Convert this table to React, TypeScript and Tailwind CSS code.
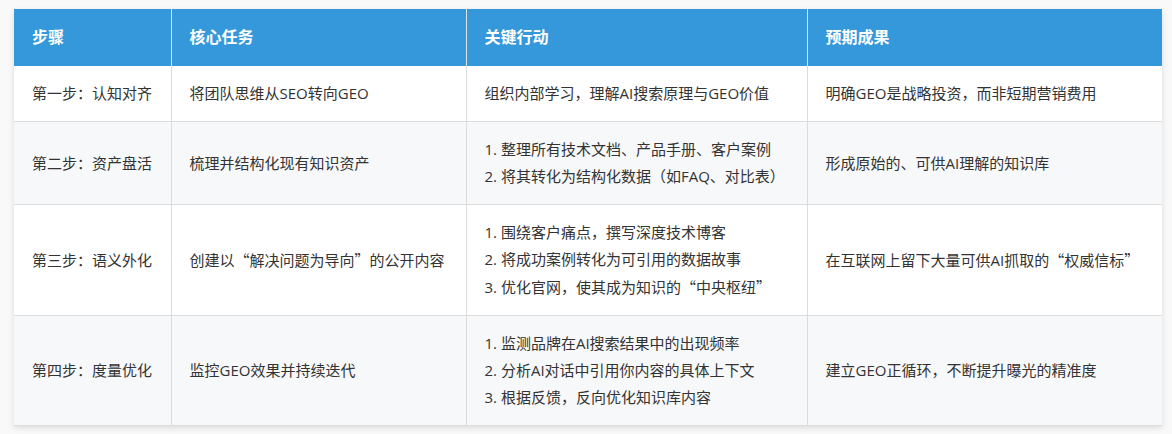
const rows = [
    {
        step: '第一步：认知对齐',
        task: '将团队思维从SEO转向GEO',
        actions: ['组织内部学习，理解AI搜索原理与GEO价值'],
        numbered: false,
        result: '明确GEO是战略投资，而非短期营销费用',
    },
    {
        step: '第二步：资产盘活',
        task: '梳理并结构化现有知识资产',
        actions: ['整理所有技术文档、产品手册、客户案例', '将其转化为结构化数据（如FAQ、对比表）'],
        numbered: true,
        result: '形成原始的、可供AI理解的知识库',
    },
    {
        step: '第三步：语义外化',
        task: '创建以“解决问题为导向”的公开内容',
        actions: ['围绕客户痛点，撰写深度技术博客', '将成功案例转化为可引用的数据故事', '优化官网，使其成为知识的“中央枢纽”'],
        numbered: true,
        result: '在互联网上留下大量可供AI抓取的“权威信标”',
    },
    {
        step: '第四步：度量优化',
        task: '监控GEO效果并持续迭代',
        actions: ['监测品牌在AI搜索结果中的出现频率', '分析AI对话中引用你内容的具体上下文', '根据反馈，反向优化知识库内容'],
        numbered: true,
        result: '建立GEO正循环，不断提升曝光的精准度',
    },
]

const headers = ['步骤', '核心任务', '关键行动', '预期成果']
const widths = ['w-[157px]', 'w-[295px]', 'w-[341px]', 'w-[355px]']

// curly quotes should come out full width, as in CJK fonts
function Txt({text}: { text: string }) {
    const parts = text.split(/([“”])/)
    return <>{parts.map((p, i) => p === '“' || p === '”'
        ? <span key={i} style={{fontFamily: '"Noto Sans CJK SC", sans-serif'}}>{p}</span>
        : p)}</>
}

export default function App() {
    return <div className="min-h-[434px] bg-[#f9f9f9] pt-[9px] pl-[14px]"
                style={{fontFamily: '"Segoe UI", "Open Sans", "Noto Sans CJK SC", sans-serif'}}>
        <div className="w-[1148px] bg-white shadow-[0_2px_6px_rgba(0,0,0,0.12)]">
            <table className="w-full border-collapse table-fixed">
                <thead>
                <tr className="bg-[#3498db] text-white">
                    {headers.map((h, i) => <th key={h}
                                               className={`${widths[i]} text-left font-bold text-[16px] leading-[27px] py-[15px] px-[18px] ${i > 0 ? 'border-l border-[#dde3e8]' : ''}`}>
                        {h}
                    </th>)}
                </tr>
                </thead>
                <tbody>
                {rows.map((r, idx) => <tr key={r.step}
                                          className={`border-b border-[#dcdcdc] ${idx % 2 === 1 ? 'bg-[#f7f8fa]' : 'bg-white'}`}>
                    <td className="py-[14px] px-[18px] text-[15px] leading-[27px] text-[#333] align-middle">{r.step}</td>
                    <td className="py-[14px] px-[18px] text-[15px] leading-[27px] text-[#333] border-l border-[#dcdcdc] align-middle">
                        <Txt text={r.task}/>
                    </td>
                    <td className="py-[14px] px-[18px] text-[15px] leading-[27px] text-[#333] border-l border-[#dcdcdc] align-middle">
                        {r.numbered
                            ? r.actions.map((a, i) => <div key={a}>{i + 1}. <Txt text={a}/></div>)
                            : r.actions[0]}
                    </td>
                    <td className="py-[14px] px-[18px] text-[15px] leading-[27px] text-[#333] border-l border-[#dcdcdc] align-middle">
                        <Txt text={r.result}/>
                    </td>
                </tr>)}
                </tbody>
            </table>
        </div>
    </div>
}
